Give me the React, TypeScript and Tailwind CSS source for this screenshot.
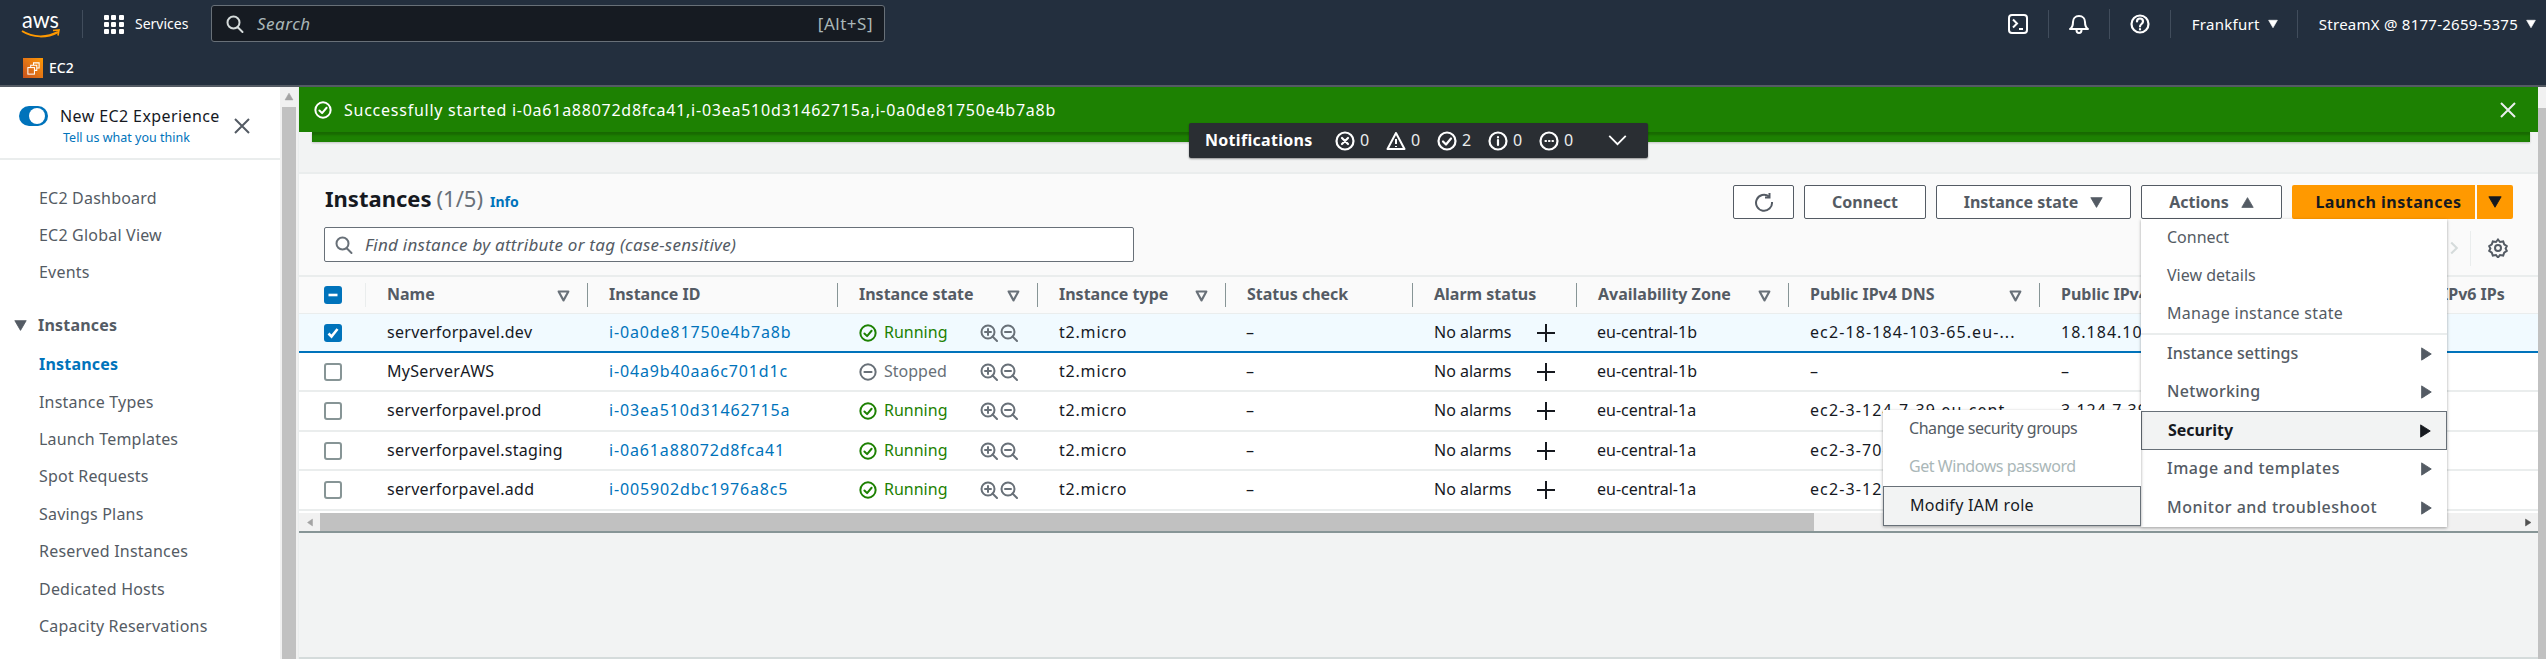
import type { ReactNode } from "react";

const columns = [
  { label: "", w: "w-[67px]", filter: false },
  { label: "Name", w: "w-[222px]", filter: true },
  { label: "Instance ID", w: "w-[250px]", filter: false },
  { label: "Instance state", w: "w-[200px]", filter: true },
  { label: "Instance type", w: "w-[188px]", filter: true },
  { label: "Status check", w: "w-[187px]", filter: false },
  { label: "Alarm status", w: "w-[164px]", filter: false },
  { label: "Availability Zone", w: "w-[212px]", filter: true },
  { label: "Public IPv4 DNS", w: "w-[251px]", filter: true },
  { label: "Public IPv4 address", w: "w-[381px]", filter: false },
  { label: "IPv6 IPs", w: "w-[200px]", filter: false },
];

const instances = [
  { name: "serverforpavel.dev", id: "i-0a0de81750e4b7a8b", running: true, az: "eu-central-1b", dns: "ec2-18-184-103-65.eu-...", ip: "18.184.103.65", h: "h-[39px]", selected: true },
  { name: "MyServerAWS", id: "i-04a9b40aa6c701d1c", running: false, az: "eu-central-1b", dns: "–", ip: "–", h: "h-[39px]", selected: false },
  { name: "serverforpavel.prod", id: "i-03ea510d31462715a", running: true, az: "eu-central-1a", dns: "ec2-3-124-7-39.eu-cent...", ip: "3.124.7.39", h: "h-[40px]", selected: false },
  { name: "serverforpavel.staging", id: "i-0a61a88072d8fca41", running: true, az: "eu-central-1a", dns: "ec2-3-70-14-12.eu-cent...", ip: "3.70.14.12", h: "h-[39px]", selected: false },
  { name: "serverforpavel.add", id: "i-005902dbc1976a8c5", running: true, az: "eu-central-1a", dns: "ec2-3-121-8-44.eu-cent...", ip: "3.121.8.44", h: "h-[40px]", selected: false },
];

const navTop = ["EC2 Dashboard", "EC2 Global View", "Events"];
const navInstances = ["Instances", "Instance Types", "Launch Templates", "Spot Requests", "Savings Plans", "Reserved Instances", "Dedicated Hosts", "Capacity Reservations"];

function Caret({ dir = "down", className = "" }: { dir?: "down" | "up" | "right" | "left"; className?: string }) {
  const pts = { down: "1,2 15,2 8,14", up: "1,14 15,14 8,2", right: "3,1 3,15 14,8", left: "13,1 13,15 3,8" }[dir];
  return (
    <svg viewBox="0 0 16 16" className={className}>
      <polygon points={pts} fill="currentColor" stroke="currentColor" strokeWidth="1" strokeLinejoin="round" />
    </svg>
  );
}

function FilterCaret() {
  return (
    <svg viewBox="0 0 16 16" className="w-[13px] h-[13px] text-[#687078]">
      <polygon points="2,3 14,3 8,14" fill="none" stroke="currentColor" strokeWidth="2.6" strokeLinejoin="round" />
    </svg>
  );
}

function Circle({ children, className = "" }: { children?: ReactNode; className?: string }) {
  return (
    <svg viewBox="0 0 20 20" fill="none" stroke="currentColor" strokeWidth="2.2" strokeLinecap="round" strokeLinejoin="round" className={className}>
      <circle cx="10" cy="10" r="8.5" />
      {children}
    </svg>
  );
}

function CheckCircle({ className = "" }: { className?: string }) {
  return (
    <Circle className={className}>
      <path d="M6 10.5l3 3 5-6" />
    </Circle>
  );
}

function MagIcon({ plus }: { plus: boolean }) {
  return (
    <svg viewBox="0 0 18 18" fill="none" stroke="currentColor" strokeWidth="2" strokeLinecap="round" className="w-[18px] h-[18px] text-[#687078]">
      <circle cx="8" cy="8" r="6.5" />
      <path d="M12.5 12.5L17 17" />
      <path d="M5 8h6" />
      {plus && <path d="M8 5v6" />}
    </svg>
  );
}

function SearchIcon({ className = "" }: { className?: string }) {
  return (
    <svg viewBox="0 0 18 18" fill="none" stroke="currentColor" strokeWidth="2" strokeLinecap="round" className={className}>
      <circle cx="7.5" cy="7.5" r="6" />
      <path d="M12 12.5L16.5 17" />
    </svg>
  );
}

function CloseIcon({ className = "" }: { className?: string }) {
  return (
    <svg viewBox="0 0 16 16" fill="none" stroke="currentColor" strokeWidth="2" className={className}>
      <path d="M1 1l14 14M15 1L1 15" />
    </svg>
  );
}

function Checkbox({ state }: { state: "on" | "off" | "some" }) {
  if (state === "off") return <span className="block w-[18px] h-[18px] rounded-[3px] border-2 border-[#879596] bg-white" />;
  return (
    <span className="flex items-center justify-center w-[18px] h-[18px] rounded-[3px] bg-[#0073bb]">
      <svg viewBox="0 0 14 14" fill="none" stroke="white" strokeWidth="2.6" className="w-[14px] h-[14px]">
        {state === "on" ? <path d="M2.5 7.5l3 3 6-7.5" /> : <path d="M2.5 7h9" />}
      </svg>
    </span>
  );
}

function Notif({ icon, n }: { icon: ReactNode; n: number }) {
  return (
    <span className="flex items-center gap-[5px] w-[51px]">
      {icon}
      <span className="text-[#eaeded] -mt-[2px]">{n}</span>
    </span>
  );
}

function Btn({ children, w }: { children: ReactNode; w: string }) {
  return (
    <button className={`${w} h-[34px] flex items-center justify-center gap-[12px] rounded-[2px] border border-[#545b64] bg-white text-[#545b64] font-bold text-[16px]`}>
      {children}
    </button>
  );
}

function MenuItem({ label, arrow, active, disabled, bold, track = "", h = "h-[38px]" }: { label: string; arrow?: boolean; active?: boolean; disabled?: boolean; bold?: boolean; track?: string; h?: string }) {
  const tone = disabled ? "text-[#aab7b8]" : active ? "text-[#16191f]" : "text-[#545b64]";
  const box = active ? "bg-[#f2f3f3] border border-[#687078]" : "";
  return (
    <div className={`${h} ${box} ${tone} ${bold ? "font-bold" : ""} ${track} flex items-center justify-between pl-[26px] pr-[14px] pb-[2px] text-[16px]`}>
      <span>{label}</span>
      {arrow && <Caret dir="right" className={`mt-[2px] w-[14px] h-[14px] ${active ? "text-[#16191f]" : "text-[#545b64]"}`} />}
    </div>
  );
}

export default function App() {
  return (
    <div className="relative w-[2546px] h-[659px] overflow-hidden flex flex-col bg-white font-['Noto_Sans',sans-serif] text-[16px] leading-[22px]">
      {/* top nav */}
      <header className="h-[87px] shrink-0 bg-[#232f3e] border-b-[2px] border-[#545b64] text-white">
        <div className="h-[48px] flex items-center">
          <div className="w-[82px] pl-[21px]">
            <svg viewBox="0 -6 40 40" className="w-[40px] h-[40px]">
              <text x="1" y="18" fill="white" fontSize="24" textLength="37" lengthAdjust="spacingAndGlyphs" fontFamily="Lato, sans-serif">aws</text>
              <path d="M1 21c11 7 25 7 36 1" fill="none" stroke="#f90" strokeWidth="2" />
              <path d="M32 20.5l6-.5-1 5.5" fill="none" stroke="#f90" strokeWidth="1.6" />
            </svg>
          </div>
          <span className="w-px h-[28px] bg-[#414d5c]" />
          <div className="grid grid-cols-3 gap-[2px] w-[20px] ml-[21px]">
            {[0, 1, 2, 3, 4, 5, 6, 7, 8].map((i) => (
              <span key={i} className="w-[5px] h-[5px] bg-white rounded-[1px]" />
            ))}
          </div>
          <span className="ml-[11px] text-[14px] w-[76px]">Services</span>
          <div className="w-[674px] h-[37px] rounded-[3px] border border-[#687078] bg-[#161b22] flex items-center pl-[14px] pr-[11px] text-[#aab7b8] -mt-[1px]">
            <SearchIcon className="w-[18px] h-[20px] text-[#d5dbdb]" />
            <span className="ml-[13px] italic text-[17px] tracking-[0.5px]">Search</span>
            <span className="ml-auto text-[17px] tracking-[0.5px]">[Alt+S]</span>
          </div>
          <div className="ml-auto flex items-center">
            <svg viewBox="0 0 20 20" fill="none" stroke="white" strokeWidth="2" className="w-[20px] h-[20px]">
              <rect x="1" y="1" width="18" height="18" rx="3" />
              <path d="M5 5.5l4 4-4 4M11 15h4" />
            </svg>
            <span className="w-px h-[28px] bg-[#414d5c] mx-[20px]" />
            <svg viewBox="0 0 20 20" fill="none" stroke="white" strokeWidth="2" strokeLinejoin="round" className="w-[20px] h-[20px]">
              <path d="M1 15c3-2 3-4 3-7 0-3 2-6 6-6s6 3 6 6c0 3 0 5 3 7z" />
              <path d="M7.5 16c0 4 5 4 5 0" />
            </svg>
            <span className="w-px h-[30px] bg-[#414d5c] mx-[20px]" />
            <Circle className="w-[20px] h-[20px]">
              <path d="M7 7.5c0-4 6-4 6 0 0 2.5-3 2.5-3 5M10 15v.5" />
            </Circle>
            <span className="w-px h-[28px] bg-[#414d5c] ml-[20px] mr-[21px]" />
            <span className="text-[15px] tracking-[0.3px]">Frankfurt</span>
            <Caret className="w-[10px] h-[10px] ml-[8px]" />
            <span className="w-px h-[28px] bg-[#414d5c] ml-[19px] mr-[21px]" />
            <span className="text-[15px] tracking-[0.25px]">StreamX @ 8177-2659-5375</span>
            <Caret className="w-[10px] h-[10px] ml-[8px] mr-[10px]" />
          </div>
        </div>
        <div className="h-[38px] flex items-center pl-[23px] pt-[2px]">
          <span className="w-[20px] h-[20px] flex items-center justify-center bg-gradient-to-tr from-[#c8511b] to-[#ff9900]">
            <svg viewBox="0 0 16 16" fill="none" stroke="white" strokeWidth="1.1" className="w-[15px] h-[15px]">
              <rect x="2" y="7" width="7" height="7" />
              <path d="M5 7V4.5h6.5V10H9M8 4.5V2h6v5.5h-2.5" />
            </svg>
          </span>
          <span className="ml-[6px] text-[14px] font-medium">EC2</span>
        </div>
      </header>

      <div className="flex-1 flex min-h-0">
        {/* side nav */}
        <aside className="w-[280px] shrink-0 bg-white text-[#545b64]">
          <div className="relative h-[73px] border-b-[2px] border-[#eaeded]">
            <div className="pl-[19px] pt-[18px] flex items-center gap-[12px]">
              <span className="relative w-[29px] h-[20px] rounded-full bg-[#0073bb]">
                <span className="absolute right-[3px] top-[2px] w-[16px] h-[16px] rounded-full bg-white" />
              </span>
              <span className="text-[#16191f] tracking-[0.4px]">New EC2 Experience</span>
            </div>
            <div className="pl-[63px] pt-[1px] text-[12.5px] text-[#0073bb] leading-[20px]">Tell us what you think</div>
            <CloseIcon className="absolute left-[234px] top-[31px] w-[16px] h-[16px] text-[#545b64]" />
          </div>
          <nav className="pl-[39px] tracking-[0.2px]">
            <ul className="pt-[19px]">
              {navTop.map((n) => (
                <li key={n} className="h-[37.4px] flex items-center">{n}</li>
              ))}
            </ul>
            <div className="relative mt-[15px] h-[37.4px] flex items-center font-bold">
              <Caret className="absolute -left-[25px] top-[13px] w-[13px] h-[13px]" />
              <span className="-ml-px">Instances</span>
            </div>
            <ul className="pt-[2px]">
              {navInstances.map((n, i) => (
                <li key={n} className={`h-[37.4px] flex items-center ${i === 0 ? "font-bold text-[#0073bb]" : ""}`}>{n}</li>
              ))}
            </ul>
          </nav>
        </aside>

        {/* side nav scrollbar */}
        <div className="w-[19px] shrink-0 bg-[#f1f1f1] border-r border-[#eaeded] flex flex-col items-center">
          <Caret dir="up" className="w-[10px] h-[9px] mt-[5px] text-[#a3a3a3]" />
          <div className="mt-[6px] w-[14px] flex-1 bg-[#c1c1c1]" />
        </div>

        {/* main content */}
        <main className="relative flex-1 min-w-0 bg-[#f2f3f3] flex flex-col">
          <div className="h-[45px] bg-[#1d8102] text-white flex items-center pl-[15px] pr-[22px] relative z-10">
            <CheckCircle className="w-[18px] h-[18px]" />
            <span className="ml-[12px] tracking-[0.75px]">Successfully started i-0a61a88072d8fca41,i-03ea510d31462715a,i-0a0de81750e4b7a8b</span>
            <CloseIcon className="ml-auto w-[16px] h-[16px] text-[#eaeded]" />
          </div>
          <div className="h-[10px] mx-[13px] mr-[8px] bg-[#1d8102] shadow-[inset_0_3px_2px_rgba(0,0,0,0.18),0_1px_2px_rgba(0,0,0,0.2)]" />

          <section className="mt-[30px] h-[361px] bg-[#fafafa] border-t-[2px] border-[#eaeded] border-b-[2px] border-b-[#879596] flex flex-col">
            <div className="h-[101px] relative px-[25px] shrink-0">
              <div className="flex items-center justify-between pt-[11px]">
                <div className="flex items-baseline text-[22px] leading-[34px] -mt-[4px] pl-px">
                  <h1 className="font-bold text-[#16191f]">Instances</h1>
                  <span className="ml-[5px] text-[#687078]">(1/5)</span>
                  <a className="ml-[7px] text-[14px] font-bold text-[#0073bb]">Info</a>
                </div>
                <div className="flex gap-[10px] pr-[0px]">
                  <Btn w="w-[61px]">
                    <svg viewBox="0 0 20 20" fill="none" stroke="currentColor" strokeWidth="2" className="w-[20px] h-[20px]">
                      <path d="M15 4.5A8 8 0 1 0 18 10" />
                      <path d="M15.5 1v4.5H11" />
                    </svg>
                  </Btn>
                  <Btn w="w-[122px]">Connect</Btn>
                  <Btn w="w-[195px]">
                    Instance state
                    <Caret className="w-[13px] h-[13px]" />
                  </Btn>
                  <Btn w="w-[141px]">
                    Actions
                    <Caret dir="up" className="w-[13px] h-[13px]" />
                  </Btn>
                  <div className="flex gap-[2px] text-[#16191f] font-bold">
                    <span className="w-[183px] h-[34px] rounded-l-[2px] bg-[#ff9900] flex items-center justify-center pl-[10px] tracking-[0.5px]">Launch instances</span>
                    <span className="w-[36px] h-[34px] rounded-r-[2px] bg-[#ff9900] flex items-center justify-center">
                      <Caret className="w-[14px] h-[14px]" />
                    </span>
                  </div>
                </div>
              </div>
              <div className="mt-[8px] w-[810px] h-[35px] bg-white rounded-[2px] border border-[#687078] flex items-center pl-[10px]">
                <SearchIcon className="w-[18px] h-[20px] text-[#687078]" />
                <span className="ml-[12px] italic text-[#545b64] text-[17px] tracking-[0.25px]">Find instance by attribute or tag (case-sensitive)</span>
              </div>
              <span className="absolute left-[2171px] top-[57px] h-[35px] w-px bg-[#eaeded]" />
              <svg viewBox="0 0 20 20" className="absolute left-[2148px] top-[66px] w-[14px] h-[16px] text-[#d5dbdb]" fill="none" stroke="currentColor" strokeWidth="3">
                <path d="M6 2l8 8-8 8" />
              </svg>
              <svg viewBox="0 0 20 20" fill="none" stroke="currentColor" strokeWidth="2" className="absolute left-[2189px] top-[64px] w-[20px] h-[20px] text-[#545b64]">
                <circle cx="10" cy="10" r="3" />
                <path d="M10 1.5l2 2.5 3.2-.6 1 3 2.6 1.8-1.2 2.3 1.2 2.3-2.6 1.8-1 3-3.2-.6-2 2.5-2-2.5-3.2.6-1-3-2.6-1.8 1.2-2.3-1.2-2.3 2.6-1.8 1-3 3.2.6z" />
              </svg>
            </div>

            <div className="flex-1 overflow-hidden bg-white">
              <div className="w-[2322px]">
                <div className="flex h-[39px] bg-[#fafafa] border-t-[2px] border-[#eaeded] border-b-[1px] border-b-[#eaeded] text-[#545b64] font-bold">
                  {columns.map((c, i) => (
                    <div key={i} className={`${c.w} shrink-0 h-full flex items-center`}>
                      {i === 0 ? (
                        <div className="w-full pl-[25px] flex items-center h-[24px] border-r border-[#eaeded]">
                          <Checkbox state="some" />
                        </div>
                      ) : (
                        <div className={`w-full h-[24px] flex items-center justify-between pl-[21px] pr-[17px] ${i === columns.length - 1 ? "" : "border-r border-[#879596]"}`}>
                          <span className="whitespace-nowrap -mt-[2px]">{c.label}</span>
                          {c.filter && <FilterCaret />}
                        </div>
                      )}
                    </div>
                  ))}
                </div>
                {instances.map((r) => (
                  <div key={r.id} className={`flex items-center ${r.h} text-[#16191f] ${r.selected ? "bg-[#f1faff] border-b-[2px] border-[#0073bb]" : "border-b-[2px] border-[#eaeded]"}`}>
                    <div className="w-[67px] pl-[25px]">
                      <Checkbox state={r.selected ? "on" : "off"} />
                    </div>
                    <div className="w-[222px] pl-[21px] pb-[2px] whitespace-nowrap tracking-[0.3px]">{r.name}</div>
                    <div className="w-[250px] pl-[21px] pb-[2px] text-[#0073bb] whitespace-nowrap tracking-[0.85px]">{r.id}</div>
                    <div className="w-[200px] pl-[21px] flex items-center">
                      {r.running ? <CheckCircle className="w-[18px] h-[18px] text-[#1d8102]" /> : (
                        <Circle className="w-[18px] h-[18px] text-[#687078]">
                          <path d="M6 10h8" />
                        </Circle>
                      )}
                      <span className={`ml-[7px] w-[96px] pb-[2px] ${r.running ? "text-[#1d8102]" : "text-[#687078]"}`}>{r.running ? "Running" : "Stopped"}</span>
                      <span className="flex gap-[2px]">
                        <MagIcon plus />
                        <MagIcon plus={false} />
                      </span>
                    </div>
                    <div className="w-[188px] pl-[21px] pb-[2px] tracking-[0.8px]">t2.micro</div>
                    <div className="w-[187px] pl-[20px] pb-[2px]">–</div>
                    <div className="w-[164px] pl-[21px] flex items-center">
                      <span className="w-[103px] pb-[2px]">No alarms</span>
                      <svg viewBox="0 0 18 18" stroke="#16191f" strokeWidth="2" className="w-[18px] h-[18px]">
                        <path d="M9 0v18M0 9h18" />
                      </svg>
                    </div>
                    <div className="w-[212px] pl-[20px] pb-[2px]">{r.az}</div>
                    <div className="w-[251px] pl-[21px] pb-[2px] whitespace-nowrap tracking-[1.1px]">{r.dns}</div>
                    <div className="w-[381px] pl-[21px] pb-[2px] tracking-[1px]">{r.ip}</div>
                  </div>
                ))}
              </div>
              <div className="h-[18px] mt-[2px] bg-[#f1f1f1] flex items-center">
                <Caret dir="left" className="w-[8px] h-[11px] ml-[7px] text-[#a3a3a3]" />
                <div className="ml-[6px] w-[1494px] h-full bg-[#c1c1c1]" />
                <Caret dir="right" className="w-[8px] h-[11px] ml-auto mr-[6px] text-[#505050]" />
              </div>
            </div>
          </section>
          <div className="flex-1 border-b-[2px] border-[#d5dbdb]" />

          {/* notifications bar */}
          <div className="absolute z-20 left-[890px] top-[36px] w-[459px] h-[35px] rounded-[2px] bg-[#2a2e33] shadow-[0_1px_2px_rgba(0,0,0,0.4)] text-white flex items-center pl-[16px]">
            <span className="font-bold w-[130px] -mt-[2px] tracking-[0.3px]">Notifications</span>
            <Notif n={0} icon={<Circle className="w-[20px] h-[20px]"><path d="M7 7l6 6M13 7l-6 6" /></Circle>} />
            <Notif n={0} icon={
              <svg viewBox="0 0 20 20" fill="none" stroke="white" strokeWidth="2" strokeLinejoin="round" className="w-[20px] h-[20px]">
                <path d="M10 2L1.5 18h17zM10 8v5M10 15v1" />
              </svg>
            } />
            <Notif n={2} icon={<CheckCircle className="w-[20px] h-[20px]" />} />
            <Notif n={0} icon={<Circle className="w-[20px] h-[20px]"><path d="M10 9v5M10 6v.5" /></Circle>} />
            <Notif n={0} icon={<Circle className="w-[20px] h-[20px]"><path d="M6.5 10h.5M10 10h.5M13.5 10h.5" /></Circle>} />
            <svg viewBox="0 0 20 12" fill="none" stroke="white" strokeWidth="2" className="ml-[18px] w-[19px] h-[11px]">
              <path d="M1 1l9 9 9-9" />
            </svg>
          </div>

          {/* actions menu */}
          <div className="absolute z-20 left-[1842px] top-[132px] w-[306px] bg-white shadow-[0_1px_3px_rgba(0,0,0,0.35)]">
            <MenuItem label="Connect" />
            <MenuItem label="View details" />
            <div className="border-b-[2px] border-[#eaeded]"><MenuItem label="Manage instance state" track="tracking-[0.3px]" /></div>
            <MenuItem label="Instance settings" arrow track="font-medium" />
            <MenuItem label="Networking" arrow track="font-medium tracking-[0.3px]" />
            <MenuItem label="Security" arrow active bold h="h-[39px]" />
            <MenuItem label="Image and templates" arrow track="font-medium tracking-[0.5px]" />
            <MenuItem label="Monitor and troubleshoot" arrow track="font-medium tracking-[0.5px]" h="h-[39px]" />
          </div>
          {/* security submenu */}
          <div className="absolute z-20 left-[1584px] top-[323px] w-[258px] bg-white shadow-[0_1px_3px_rgba(0,0,0,0.35)]">
            <MenuItem label="Change security groups" track="tracking-[-0.45px]" />
            <MenuItem label="Get Windows password" disabled track="tracking-[-0.45px]" />
            <MenuItem label="Modify IAM role" active h="h-[40px]" track="tracking-[0.3px]" />
          </div>
        </main>

        {/* page scrollbar */}
        <div className="w-[8px] shrink-0 bg-[#f1f1f1]">
          <div className="mt-[21px] h-full bg-[#c1c1c1]" />
        </div>
      </div>
    </div>
  );
}
